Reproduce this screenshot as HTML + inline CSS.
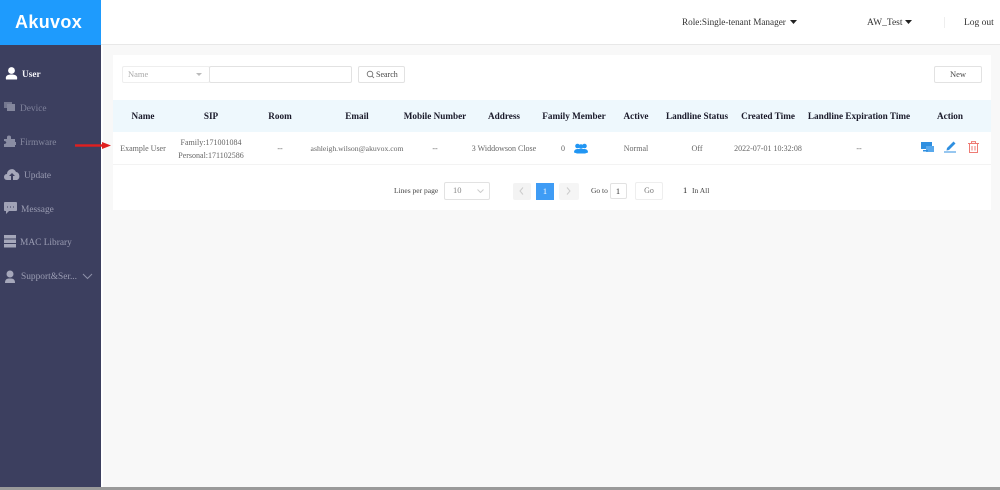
<!DOCTYPE html>
<html><head><meta charset="utf-8">
<style>
html,body{margin:0;padding:0;width:1000px;height:490px;overflow:hidden;background:#f8f8f8;font-family:"Liberation Serif",serif;color:#555;font-size:9px}
#w{left:0;top:0;width:1000px;height:490px;filter:blur(.3px)}
div,span{position:absolute;box-sizing:border-box}
.t{white-space:nowrap;line-height:12px}
.c{transform:translateX(-50%)}
.h{font-weight:bold;font-size:9.2px;color:#1a1a2a;top:110px}
.r{top:143px;color:#666;font-size:8px}
.n{color:#9a9cb2;font-size:9.4px}
svg{position:absolute}
.btn{background:#fff;border:1px solid #e2e2e2;border-radius:2px}
</style></head><body><div id="w">
<div style="left:0;top:0;width:1000px;height:45px;background:#fff;border-bottom:1px solid #e8e8e8"></div>
<div style="left:0;top:45px;width:101px;height:442px;background:#3c3f5f"></div>
<div style="left:0;top:0;width:101px;height:45px;background:#1e9bfd"></div>
<div style="left:101px;top:45px;width:2px;height:442px;background:#fff"></div>
<div style="left:0;top:487px;width:1000px;height:3px;background:#9a9a9a"></div>
<div class="t" style="left:15px;top:13px;font:bold 18px/19px 'Liberation Sans',sans-serif;letter-spacing:.35px;color:#fff">Akuvox</div>

<div class="t" style="left:682px;top:16px;color:#333;font-size:9.2px">Role:Single-tenant Manager</div>
<svg style="left:790px;top:20px" width="7" height="5"><path d="M0 0H7L3.500 4Z" fill="#222"/></svg>
<div class="t" style="left:867px;top:17px;color:#333;font-size:9.5px">AW_Test</div>
<svg style="left:905px;top:20px" width="7" height="5"><path d="M0 0H7L3.500 4Z" fill="#222"/></svg>
<div style="left:944px;top:17px;width:1px;height:11px;background:#eee"></div>
<div class="t" style="left:964px;top:17px;color:#333;font-size:9.5px">Log out</div>

<svg style="left:5px;top:67px" width="14" height="13"><circle cx="6.500" cy="3.500" r="3.400" fill="#fff"/><path d="M1 12.500C0 8.500 3 7.500 6.500 7.500S13 8.500 12 12.500Z" fill="#fff"/></svg>
<div class="t" style="left:22px;top:69px;color:#f4f4f8;font-size:9.300px;font-weight:bold">User</div>
<svg style="left:4px;top:101px" width="12" height="11" fill="#74778f"><rect x="0" y="1" width="8" height="6"/><rect x="3" y="3" width="8" height="7" fill="#84879d"/></svg>
<div class="t n" style="left:20px;top:103px;color:#7f829b">Device</div>
<svg style="left:4px;top:135px" width="12" height="13" fill="#8a8da3"><path d="M0 4H3V2C3 0 7 0 7 2V4H11V7H12V10H11V12H0V9C3 9 3 6 0 6Z"/></svg>
<div class="t n" style="left:20px;top:137px;color:#85889f">Firmware</div>
<svg style="left:4px;top:168px" width="16" height="13"><path d="M3 12C-1 12-1 6 3 6C3 1 10-1 12 4C16 4 17 12 12 12Z" fill="#a5a7ba"/><path d="M8 5L5 8H7V12H9V8H11Z" fill="#3c3f5f"/></svg>
<div class="t n" style="left:24px;top:170px">Update</div>
<svg style="left:4px;top:202px" width="13" height="13"><path d="M1 0H12C13 0 13 1 13 1V8C13 9 12 9 12 9H5L2 12V9H1C0 9 0 8 0 8V1C0 1 0 0 1 0Z" fill="#a0a2b6"/><path d="M3 5h1M6 5h1M9 5h1" stroke="#3c3f5f"/></svg>
<div class="t n" style="left:21px;top:204px">Message</div>
<svg style="left:4px;top:235px" width="12" height="13" fill="#a5a7ba"><rect width="12" height="3.500"/><rect y="4.500" width="12" height="3.500"/><rect y="9" width="12" height="3.500"/></svg>
<div class="t n" style="left:20px;top:237px">MAC Library</div>
<svg style="left:5px;top:270px" width="10" height="13" fill="#a5a7ba"><circle cx="5" cy="4" r="3.500"/><path d="M0 13C0 9 2 8.500 5 8.500S10 9 10 13Z"/></svg>
<div class="t n" style="left:21px;top:271px">Support&amp;Ser...</div>
<svg style="left:82px;top:273px" width="11" height="7"><path d="M1 1L5.500 5.500L10 1" fill="none" stroke="#8d90a8"/></svg>

<div style="left:113px;top:55px;width:878px;height:155px;background:#fff"></div>
<svg style="left:75px;top:142px" width="36" height="7"><rect y="2.300" width="29" height="2.400" fill="#e01f1f"/><path d="M27 0L36 3.500L27 7Z" fill="#e01f1f"/></svg>
<div class="btn" style="left:122px;top:66px;width:88px;height:17px;border-color:#eee"></div>
<div class="t" style="left:128px;top:68px;color:#a8a8a8;font-size:8.500px">Name</div>
<svg style="left:196px;top:73px" width="6" height="3"><path d="M0 0H6L3 3Z" fill="#bbb"/></svg>
<div class="btn" style="left:209px;top:66px;width:143px;height:17px"></div>
<div class="btn" style="left:358px;top:66px;width:47px;height:17px"></div>
<svg style="left:366px;top:70px" width="9" height="9"><circle cx="4" cy="4" r="2.800" fill="none" stroke="#666" stroke-width=".8"/><path d="M6 6L8 8" stroke="#666" stroke-width=".8"/></svg>
<div class="t" style="left:376px;top:69px;color:#444;font-size:8px">Search</div>
<div class="btn" style="left:934px;top:66px;width:48px;height:17px"></div>
<div class="t c" style="left:958px;top:68px;color:#444;font-size:8.500px">New</div>

<div style="left:113px;top:100px;width:878px;height:32px;background:#eef8fd"></div>
<div style="left:113px;top:164px;width:878px;height:1px;background:#f3f3f3"></div>
<div class="t c h" style="left:143px">Name</div>
<div class="t c h" style="left:211px">SIP</div>
<div class="t c h" style="left:280px">Room</div>
<div class="t c h" style="left:357px">Email</div>
<div class="t c h" style="left:435px">Mobile Number</div>
<div class="t c h" style="left:504px">Address</div>
<div class="t c h" style="left:574px">Family Member</div>
<div class="t c h" style="left:636px">Active</div>
<div class="t c h" style="left:697px">Landline Status</div>
<div class="t c h" style="left:768px">Created Time</div>
<div class="t c h" style="left:859px">Landline Expiration Time</div>
<div class="t c h" style="left:950px">Action</div>

<div class="t c r" style="left:143px">Example User</div>
<div class="t c r" style="left:211px;top:137px">Family:171001084</div>
<div class="t c r" style="left:211px;top:150px">Personal:171102586</div>
<div class="t c r" style="left:280px">--</div>
<div class="t c r" style="left:357px;font-size:7.700px">ashleigh.wilson@akuvox.com</div>
<div class="t c r" style="left:435px">--</div>
<div class="t c r" style="left:504px">3 Widdowson Close</div>
<div class="t c r" style="left:563px">0</div>
<svg style="left:574px;top:143px" width="14" height="11" fill="#2196f3"><circle cx="3.500" cy="3" r="2.300"/><circle cx="10.500" cy="3" r="2.300"/><circle cx="7" cy="3.500" r="2.300"/><path d="M0 9.500C0 6.500 2 6 4 6H10C12 6 14 6.500 14 9.500L11 10.500H3Z"/></svg>
<div class="t c r" style="left:636px">Normal</div>
<div class="t c r" style="left:697px">Off</div>
<div class="t c r" style="left:768px">2022-07-01 10:32:08</div>
<div class="t c r" style="left:859px">--</div>
<svg style="left:921px;top:142px" width="13" height="11"><rect width="11" height="7" fill="#2f8fe0"/><rect x="5" y="4" width="8" height="6" fill="#58a8ec"/><rect x="2" y="8" width="5" height="1.500" fill="#2f8fe0"/></svg>
<svg style="left:944px;top:140px" width="13" height="13"><path d="M3 8L9.500 1.500L11.500 3.500L5 10L2.500 10.500Z" fill="#2f8fe0"/><rect x="0" y="11.500" width="12" height="1" fill="#2f8fe0"/></svg>
<svg style="left:968px;top:141px" width="11" height="12" fill="none" stroke="#ee7b74" stroke-width="1"><path d="M0 2.500H11M3.500 2.500V.6H7.500V2.500M1.500 2.500V11.500H9.500V2.500M4 5V9.500M7 5V9.500"/></svg>

<div class="t" style="left:394px;top:185px;color:#444;font-size:7.500px">Lines per page</div>
<div class="btn" style="left:444px;top:182px;width:46px;height:18px"></div>
<div class="t" style="left:453px;top:184px;color:#888;font-size:8.500px">10</div>
<svg style="left:477px;top:189px" width="7" height="4"><path d="M.5 .5L3.500 3.500L6.500 .5" fill="none" stroke="#ccc"/></svg>
<div style="left:513px;top:183px;width:18px;height:17px;background:#f3f3f3;border-radius:2px"></div>
<svg style="left:519px;top:187px" width="5" height="8"><path d="M4 .5L1 4L4 7.500" fill="none" stroke="#ccc"/></svg>
<div style="left:536px;top:183px;width:18px;height:17px;background:#3f9cf5"></div>
<div class="t c" style="left:545px;top:185px;color:#fff;font-size:8.500px">1</div>
<div style="left:559px;top:183px;width:20px;height:17px;background:#f5f5f5;border-radius:2px"></div>
<svg style="left:566px;top:187px" width="5" height="8"><path d="M1 .5L4 4L1 7.500" fill="none" stroke="#ccc"/></svg>
<div class="t" style="left:591px;top:185px;color:#444;font-size:7.500px">Go to</div>
<div class="btn" style="left:610px;top:183px;width:17px;height:16px"></div>
<div class="t c" style="left:618px;top:185px;color:#333;font-size:8.500px">1</div>
<div class="btn" style="left:635px;top:182px;width:28px;height:18px;border-color:#eee"></div>
<div class="t c" style="left:649px;top:185px;color:#777;font-size:8px">Go</div>
<div class="t" style="left:683px;top:184px;color:#222;font-size:8.500px">1</div>
<div class="t" style="left:692px;top:185px;color:#444;font-size:7.500px">In All</div>
</div></body></html>
